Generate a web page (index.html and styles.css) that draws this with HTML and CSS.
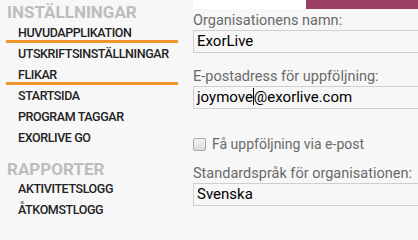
FILE: index.html
```html
<!DOCTYPE html>
<html lang="sv">
<head>
<meta charset="utf-8">
<title>Inställningar</title>
<link rel="stylesheet" href="styles.css">
</head>
<body>
<div class="page">
  <nav class="sidebar">
    <h2 class="section-title first">INSTÄLLNINGAR</h2>
    <ul class="menu">
      <li class="menu-item active">HUVUDAPPLIKATION</li>
      <li class="menu-item">UTSKRIFTSINSTÄLLNINGAR</li>
      <li class="menu-item active">FLIKAR</li>
      <li class="menu-item">STARTSIDA</li>
      <li class="menu-item">PROGRAM TAGGAR</li>
      <li class="menu-item">EXORLIVE GO</li>
    </ul>
    <h2 class="section-title second">RAPPORTER</h2>
    <ul class="menu">
      <li class="menu-item">AKTIVITETSLOGG</li>
      <li class="menu-item">ÅTKOMSTLOGG</li>
    </ul>
  </nav>
  <main class="content">
    <div class="topbar">
      <div class="topbar-white"></div>
      <div class="topbar-accent"></div>
    </div>
    <div class="form-group">
      <label class="label">Organisationens namn:</label>
      <div class="field">ExorLive</div>
    </div>
    <div class="form-group">
      <label class="label">E-postadress för uppföljning:</label>
      <div class="field">joymove<span class="caret"></span>@exorlive.com</div>
    </div>
    <div class="check-row">
      <input type="checkbox" class="checkbox" id="followup">
      <label for="followup" class="check-label">Få uppföljning via e-post</label>
    </div>
    <div class="form-group">
      <label class="label">Standardspråk för organisationen:</label>
      <div class="field">Svenska</div>
    </div>
  </main>
</div>
</body>
</html>
```

FILE: styles.css
```css
html, body {
  margin: 0;
  padding: 0;
  background: #f7f7f7;
  overflow: hidden;
}

body {
  font-family: Roboto, "Liberation Sans", sans-serif;
}

.page {
  display: flex;
  gap: 15px;
  width: 418px;
  height: 223px;
  overflow: hidden;
}

.sidebar {
  flex: 0 0 172px;
  padding-left: 6px;
}

.section-title {
  margin: 0;
  padding-left: 1px;
  font-size: 17px;
  font-weight: 700;
  line-height: 20px;
  color: #bdbdbd;
}

.section-title.first {
  margin-top: 2px;
  margin-bottom: 4px;
}

.section-title.second {
  margin-top: 11px;
  margin-bottom: 3px;
}

.menu {
  list-style: none;
  margin: 0;
  padding: 0;
}

.menu-item {
  padding-left: 12px;
  font-size: 12.5px;
  font-weight: 500;
  letter-spacing: -0.4px;
  line-height: 14px;
  color: #222;
  border-bottom: 3px solid transparent;
  margin-bottom: 4px;
  white-space: nowrap;
}

.menu-item.active {
  border-bottom-color: #f0952e;
}

.content {
  flex: 0 0 260px;
  display: flex;
  flex-direction: column;
}

.topbar {
  display: flex;
  height: 9px;
}

.topbar-white {
  width: 113px;
  background: #fff;
}

.topbar-accent {
  flex: 1;
  background: #9b3f62;
}

.form-group {
  display: flex;
  flex-direction: column;
  gap: 1px;
}

.form-group + .form-group {
  margin-top: 15px;
}

.topbar + .form-group {
  margin-top: 3px;
}

.label {
  font-size: 14.5px;
  line-height: 17px;
  color: #6a6a6a;
  white-space: nowrap;
}

.field {
  height: 21px;
  border: 1px solid #cfcfcf;
  padding-left: 3px;
  font-size: 15px;
  line-height: 21px;
  color: #000;
  white-space: nowrap;
}

.caret {
  display: inline-block;
  width: 1px;
  height: 17px;
  background: #000;
  vertical-align: -3px;
}

.check-row {
  display: flex;
  align-items: center;
  gap: 6px;
  margin-top: 27px;
  margin-bottom: 12px;
}

.checkbox {
  appearance: none;
  margin: 0;
  width: 13px;
  height: 13px;
  border: 1px solid #a9a9a9;
  border-radius: 2px;
  background: linear-gradient(#f3f3f3, #dcdcdc);
  box-sizing: border-box;
}

.check-label {
  font-size: 14px;
  line-height: 17px;
  color: #6a6a6a;
}
```
